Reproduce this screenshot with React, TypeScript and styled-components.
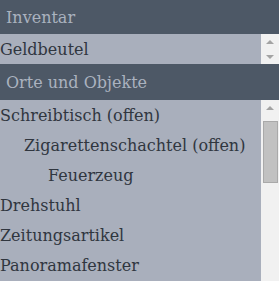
import styled, { createGlobalStyle } from "styled-components";

const GlobalStyle = createGlobalStyle`
  html, body {
    margin: 0;
    padding: 0;
    background: #a9afbc;
  }
  * {
    box-sizing: border-box;
  }
`;

type Entry = {
  label: string;
  depth?: number;
};

const inventory: Entry[] = [{ label: "Geldbeutel" }];

const places: Entry[] = [
  { label: "Schreibtisch (offen)" },
  { label: "Zigarettenschachtel (offen)", depth: 1 },
  { label: "Feuerzeug", depth: 2 },
  { label: "Drehstuhl" },
  { label: "Zeitungsartikel" },
  { label: "Panoramafenster" },
];

const Page = styled.div`
  width: 279px;
  height: 281px;
  display: flex;
  flex-direction: column;
  overflow: hidden;
  font-family: "DejaVu Serif", "Liberation Serif", serif;
  font-size: 16px;
`;

const Header = styled.div<{ $height: number }>`
  height: ${(p) => p.$height}px;
  flex-shrink: 0;
  display: flex;
  align-items: center;
  padding: 0 6px;
  background: #4d5866;
  color: #aab2bf;
`;

const Body = styled.div<{ $height?: number }>`
  display: flex;
  background: #a9afbc;
  ${(p) => (p.$height ? `height: ${p.$height}px; flex-shrink: 0;` : "flex: 1;")}
  min-height: 0;
`;

const List = styled.ul`
  list-style: none;
  margin: 0;
  padding: 0;
  flex: 1;
  overflow: hidden;
`;

const Row = styled.li<{ $depth: number }>`
  height: 30px;
  display: flex;
  align-items: center;
  padding-left: ${(p) => p.$depth * 24}px;
  color: #30363f;
  white-space: nowrap;
`;

const Bar = styled.div`
  width: 18px;
  flex-shrink: 0;
  display: flex;
  flex-direction: column;
  background: #f1f1f1;
`;

const Arrow = styled.div<{ $down?: boolean }>`
  height: 15px;
  flex-shrink: 0;
  display: flex;
  align-items: center;
  justify-content: center;
  &::before {
    content: "";
    width: 0;
    height: 0;
    border-left: 4px solid transparent;
    border-right: 4px solid transparent;
    ${(p) =>
      p.$down
        ? "border-top: 4px solid #a3a3a3;"
        : "border-bottom: 4px solid #a3a3a3;"}
  }
`;

const Track = styled.div`
  flex: 1;
  padding: 6px 1px 0 2px;
`;

const Thumb = styled.div`
  height: 62px;
  background: #c1c1c1;
  border: 1px solid #a9a9a9;
`;

function ListRows({ items }: { items: Entry[] }) {
  return (
    <List>
      {items.map((it) => (
        <Row key={it.label} $depth={it.depth ?? 0}>
          {it.label}
        </Row>
      ))}
    </List>
  );
}

export default function App() {
  return (
    <Page>
      <GlobalStyle />
      <Header $height={34}>Inventar</Header>
      <Body $height={30}>
        <ListRows items={inventory} />
        <Bar>
          <Arrow />
          <Arrow $down />
        </Bar>
      </Body>
      <Header $height={36}>Orte und Objekte</Header>
      <Body>
        <ListRows items={places} />
        <Bar>
          <Arrow />
          <Track>
            <Thumb />
          </Track>
        </Bar>
      </Body>
    </Page>
  );
}
